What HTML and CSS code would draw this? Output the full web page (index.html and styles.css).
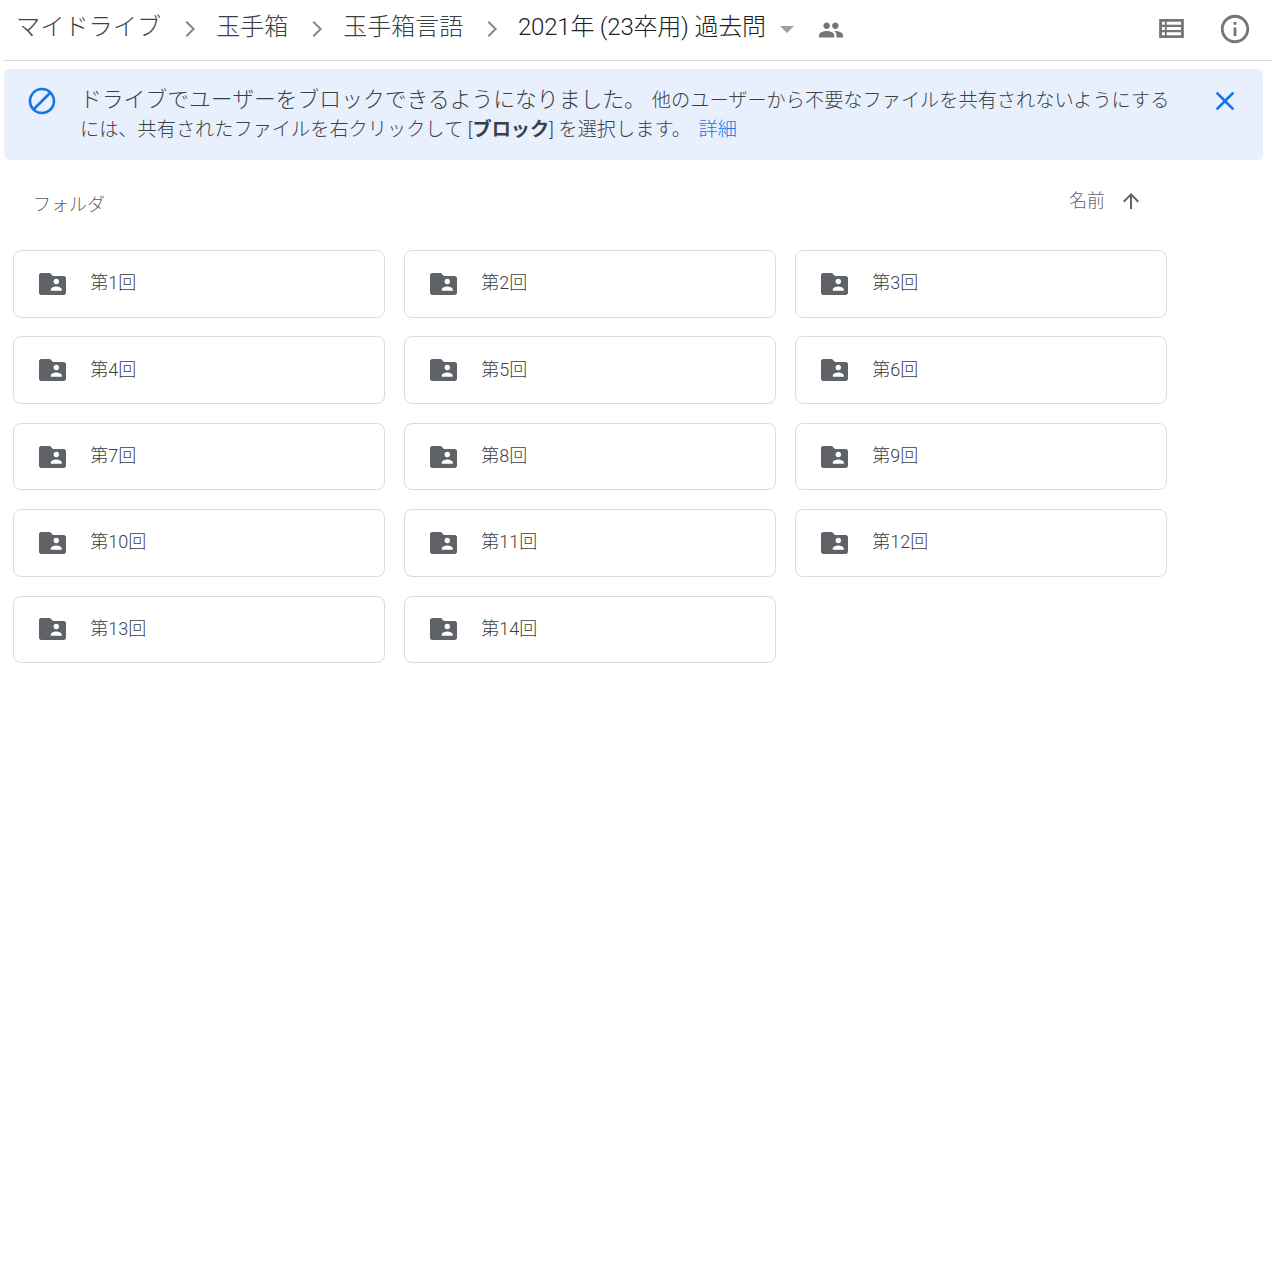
FILE: index.html
```html
<!DOCTYPE html>
<html lang="ja">
<head>
<meta charset="utf-8">
<title>2021年 (23卒用) 過去問</title>
<link rel="stylesheet" href="styles.css">
</head>
<body>
<header class="topbar">
  <nav class="crumbs">
    <span class="crumb crumb-root">マイドライブ</span>
    <svg class="chev" viewBox="0 0 24 24"><path d="M8.6 5.400 10 4l8 8-8 8-1.400-1.400L15.200 12z"/></svg>
    <span class="crumb">玉手箱</span>
    <svg class="chev" viewBox="0 0 24 24"><path d="M8.6 5.400 10 4l8 8-8 8-1.400-1.400L15.200 12z"/></svg>
    <span class="crumb">玉手箱言語</span>
    <svg class="chev chev-last" viewBox="0 0 24 24"><path d="M8.6 5.400 10 4l8 8-8 8-1.400-1.400L15.200 12z"/></svg>
    <span class="crumb current">2021年 (23卒用) 過去問</span>
    <span class="caret"></span>
    <svg class="people" viewBox="0 0 24 24"><path d="M16 11c1.660 0 2.990-1.340 2.990-3S17.660 5 16 5s-3 1.340-3 3 1.340 3 3 3zm-8 0c1.660 0 2.990-1.340 2.990-3S9.660 5 8 5 5 6.340 5 8s1.340 3 3 3zm0 2c-2.330 0-7 1.170-7 3.500V19h14v-2.500c0-2.330-4.670-3.500-7-3.500zm8 0c-.29 0-.62.020-.97.050 1.160.84 1.970 1.970 1.970 3.450V19h6v-2.500c0-2.330-4.670-3.500-7-3.500z"/></svg>
  </nav>
  <div class="tools">
    <svg class="tool-list" viewBox="0 0 26 20"><path fill-rule="evenodd" d="M0 0h26v20H0zM3 3v3h3V3zm5 0v3h15V3zM3 8.500v3h3v-3zm5 0v3h15v-3zM3 14v3h3v-3zm5 0v3h15v-3z"/></svg>
    <svg class="tool-info" viewBox="0 0 24 24"><path d="M11 7h2v2h-2zm0 4h2v6h-2zm1-9C6.480 2 2 6.480 2 12s4.480 10 10 10 10-4.480 10-10S17.520 2 12 2zm0 18c-4.410 0-8-3.590-8-8s3.590-8 8-8 8 3.590 8 8-3.590 8-8 8z"/></svg>
  </div>
</header>

<section class="banner">
  <svg class="banner-icon" viewBox="0 0 24 24"><path d="M12 2C6.480 2 2 6.480 2 12s4.480 10 10 10 10-4.480 10-10S17.520 2 12 2zM4 12c0-4.420 3.580-8 8-8 1.850 0 3.550.63 4.900 1.690L5.690 16.900C4.630 15.550 4 13.850 4 12zm8 8c-1.850 0-3.550-.63-4.900-1.690L18.310 7.100C19.370 8.450 20 10.150 20 12c0 4.420-3.580 8-8 8z"/></svg>
  <p class="banner-text"><span class="lead">ドライブでユーザーをブロックできるようになりました。</span>他のユーザーから不要なファイルを共有されないようにするには、共有されたファイルを右クリックして [<b>ブロック</b>] を選択します。 <a class="more">詳細</a></p>
  <svg class="banner-close" viewBox="0 0 24 24"><path d="M19 6.410 17.590 5 12 10.590 6.410 5 5 6.410 10.590 12 5 17.590 6.410 19 12 13.410 17.590 19 19 17.590 13.410 12z"/></svg>
</section>

<section class="list-head">
  <h2 class="section-title">フォルダ</h2>
  <div class="sort">
    <span>名前</span>
    <svg class="sort-arrow" viewBox="0 0 24 24"><path d="M4 12l1.410 1.410L11 7.830V20h2V7.830l5.580 5.590L20 12l-8-8z"/></svg>
  </div>
</section>

<main class="grid">
  <div class="card"><svg class="folder" viewBox="0 0 27 22"><use href="#f"/></svg><span>第1回</span></div>
  <div class="card"><svg class="folder" viewBox="0 0 27 22"><use href="#f"/></svg><span>第2回</span></div>
  <div class="card"><svg class="folder" viewBox="0 0 27 22"><use href="#f"/></svg><span>第3回</span></div>
  <div class="card"><svg class="folder" viewBox="0 0 27 22"><use href="#f"/></svg><span>第4回</span></div>
  <div class="card"><svg class="folder" viewBox="0 0 27 22"><use href="#f"/></svg><span>第5回</span></div>
  <div class="card"><svg class="folder" viewBox="0 0 27 22"><use href="#f"/></svg><span>第6回</span></div>
  <div class="card"><svg class="folder" viewBox="0 0 27 22"><use href="#f"/></svg><span>第7回</span></div>
  <div class="card"><svg class="folder" viewBox="0 0 27 22"><use href="#f"/></svg><span>第8回</span></div>
  <div class="card"><svg class="folder" viewBox="0 0 27 22"><use href="#f"/></svg><span>第9回</span></div>
  <div class="card"><svg class="folder" viewBox="0 0 27 22"><use href="#f"/></svg><span>第10回</span></div>
  <div class="card"><svg class="folder" viewBox="0 0 27 22"><use href="#f"/></svg><span>第11回</span></div>
  <div class="card"><svg class="folder" viewBox="0 0 27 22"><use href="#f"/></svg><span>第12回</span></div>
  <div class="card"><svg class="folder" viewBox="0 0 27 22"><use href="#f"/></svg><span>第13回</span></div>
  <div class="card"><svg class="folder" viewBox="0 0 27 22"><use href="#f"/></svg><span>第14回</span></div>
</main>

<svg class="defs" width="0" height="0">
  <symbol id="f" viewBox="0 0 27 22">
    <path fill-rule="evenodd" d="M2.200 0h8.800l3 3h10.800C26 3 27 4 27 5.200v14.600c0 1.200-1 2.200-2.200 2.200H2.200C1 22 0 21 0 19.800V2.200C0 1 1 0 2.200 0zM17.300 5.800a2.700 2.700 0 1 0 0 5.400 2.700 2.700 0 0 0 0-5.400zM11.800 17.800h11v-1.300c0-2-3.600-3-5.500-3s-5.500 1-5.500 3z"/>
  </symbol>
</svg>
</body>
</html>
```
FILE: styles.css
```css
* { box-sizing: border-box; }
html, body { margin: 0; padding: 0; background: #fff; }
body {
  width: 1273px;
  height: 1273px;
  overflow: hidden;
  font-family: Roboto, "Noto Sans CJK JP", sans-serif;
  font-weight: 300;
  color: #3c4043;
}
.topbar {
  height: 61px;
  margin-left: 3px;
  border-bottom: 1px solid #dadce0;
  display: flex;
  align-items: center;
  justify-content: space-between;
}
.crumbs { display: flex; align-items: center; padding-left: 13px; padding-bottom: 6px; }
.crumb { font-size: 24px; line-height: 32px; color: #3c4043; white-space: nowrap; }
.crumb-root { font-size: 24.2px; }
.crumb.current { color: #202124; letter-spacing: -0.2px; }
.chev { width: 24px; height: 24px; margin: 4px 15px 0 16px; fill: #80868b; }
.chev-last { margin-right: 14.8px; }
.caret {
  width: 0; height: 0;
  margin: 5px 0 0 14px;
  border-left: 7px solid transparent;
  border-right: 7px solid transparent;
  border-top: 7px solid #9aa0a6;
}
.people { width: 26px; height: 26px; margin: 6px 0 0 24px; fill: #757575; }
.tools { display: flex; align-items: center; padding-right: 21px; padding-bottom: 3px; gap: 34px; }
.tool-list { width: 25px; height: 19px; fill: #757575; }
.tool-info { width: 34px; height: 34px; fill: #757575; }

.banner {
  margin: 8px 10px 0 4px;
  height: 91px;
  background: #e8f0fe;
  border-radius: 6px;
  display: flex;
  align-items: flex-start;
}
.banner-icon { width: 32px; height: 32px; fill: #1a73e8; margin: 16px 0 0 22px; flex: none; }
.banner-text {
  margin: 16px 0 0 22px;
  width: 1100px;
  font-size: 19.2px;
  line-height: 29px;
  color: #3c4043;
}
.lead { display: inline-block; font-size: 21.8px; line-height: 29px; margin-right: 6px; }
.banner-text b { font-weight: 700; }
.more { color: #1a73e8; margin-left: 3px; }
.banner-close { width: 32px; height: 32px; fill: #1a73e8; margin: 16px 0 0 29px; flex: none; }

.list-head {
  display: flex;
  justify-content: space-between;
  align-items: flex-start;
  padding: 32px 130px 0 33px;
  height: 90px;
}
.section-title { margin: 0; font-size: 18px; line-height: 26px; font-weight: 300; color: #5f6368; }
.sort { display: flex; align-items: center; font-size: 18px; line-height: 20px; color: #5f6368; gap: 14px; margin-top: -3px; }
.sort-arrow { width: 24px; height: 24px; fill: #5f6368; }

.grid {
  margin-left: 13px;
  width: 1154px;
  display: grid;
  grid-template-columns: repeat(3, 372px);
  grid-auto-rows: 67.6px;
  row-gap: 18.8px;
  column-gap: 19px;
}
.card {
  border: 1px solid #dadce0;
  border-radius: 8px;
  display: flex;
  align-items: center;
  padding-left: 24.600px;
  font-size: 18px;
  color: #3c4043;
}
.folder { width: 27px; height: 22px; fill: #5f6368; flex: none; margin: 0 24.600px 0 0; }
.card span { padding-bottom: 5px; }
.defs { position: absolute; }
```
